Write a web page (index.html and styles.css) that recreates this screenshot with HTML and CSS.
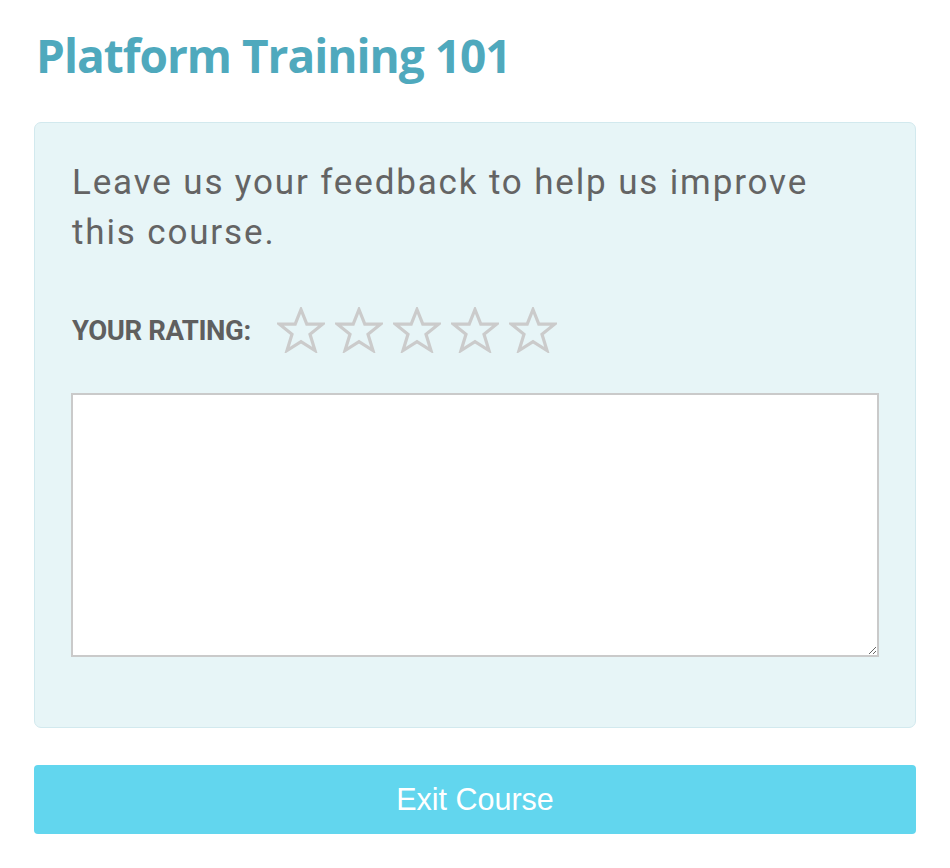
FILE: index.html
```html
<!DOCTYPE html>
<html lang="en">
<head>
  <meta charset="UTF-8" />
  <title>Platform Training 101</title>
  <link rel="stylesheet" href="styles.css">
</head>
<body>
  <div class="container">
    <h1>Platform Training 101</h1>

    <div class="feedback">
      <p>Leave us your feedback to help us improve this course.</p>

      <div class="rating">
        <span class="rating-label">YOUR RATING:</span>
        <div class="stars">
          <svg class="star" viewBox="0 0 48 46"><polygon points="24,2.5 29.8,17.2 45.5,17.2 33,27.3 38,43.5 24,34.6 10,43.5 15,27.3 2.5,17.2 18.2,17.2"/></svg>
          <svg class="star" viewBox="0 0 48 46"><polygon points="24,2.5 29.8,17.2 45.5,17.2 33,27.3 38,43.5 24,34.6 10,43.5 15,27.3 2.5,17.2 18.2,17.2"/></svg>
          <svg class="star" viewBox="0 0 48 46"><polygon points="24,2.5 29.8,17.2 45.5,17.2 33,27.3 38,43.5 24,34.6 10,43.5 15,27.3 2.5,17.2 18.2,17.2"/></svg>
          <svg class="star" viewBox="0 0 48 46"><polygon points="24,2.5 29.8,17.2 45.5,17.2 33,27.3 38,43.5 24,34.6 10,43.5 15,27.3 2.5,17.2 18.2,17.2"/></svg>
          <svg class="star" viewBox="0 0 48 46"><polygon points="24,2.5 29.8,17.2 45.5,17.2 33,27.3 38,43.5 24,34.6 10,43.5 15,27.3 2.5,17.2 18.2,17.2"/></svg>
        </div>
      </div>

      <textarea class="comments"></textarea>
    </div>

    <button class="exit-btn">Exit Course</button>
  </div>
</body>
</html>
```
FILE: styles.css
```css
body {
  margin: 0;
  background: #fff;
  font-family: 'Open Sans', sans-serif;
}
.container {
  padding: 24px 34px 20px;
}
h1 {
  margin: 0 0 36px 2px;
  font-size: 46px;
  font-weight: 700;
  letter-spacing: -1px;
  color: #4fa9bd;
  line-height: 62px;
}
.feedback {
  background: #e7f5f7;
  border: 1px solid #d2e9ee;
  border-radius: 7px;
  padding: 35px 36px 70px;
}
.feedback p {
  max-width: 780px;
  margin: 0 0 49px 1px;
  font-family: Roboto, sans-serif;
  font-size: 35px;
  letter-spacing: 1.85px;
  line-height: 50px;
  color: #646464;
}
.rating {
  display: flex;
  align-items: center;
  gap: 26px;
  margin: 0 0 40px 1px;
}
.rating-label {
  font-family: Roboto, sans-serif;
  font-size: 27.5px;
  font-weight: 700;
  letter-spacing: -0.4px;
  color: #5f5f5f;
}
.stars {
  display: flex;
  gap: 10px;
}
.star {
  width: 48px;
  height: 46px;
  fill: none;
  stroke: #cbcbcb;
  stroke-width: 3.2;
}
.comments {
  display: block;
  width: 100%;
  height: 264px;
  box-sizing: border-box;
  border: 2px solid #cacaca;
  background: #fff;
  resize: both;
}
.exit-btn {
  display: block;
  width: 100%;
  margin-top: 37px;
  height: 69px;
  border: none;
  border-radius: 4px;
  background: #62d6ee;
  color: #fff;
  font-family: 'Liberation Sans', Arial, sans-serif;
  font-size: 30.5px;
  cursor: pointer;
}
```
